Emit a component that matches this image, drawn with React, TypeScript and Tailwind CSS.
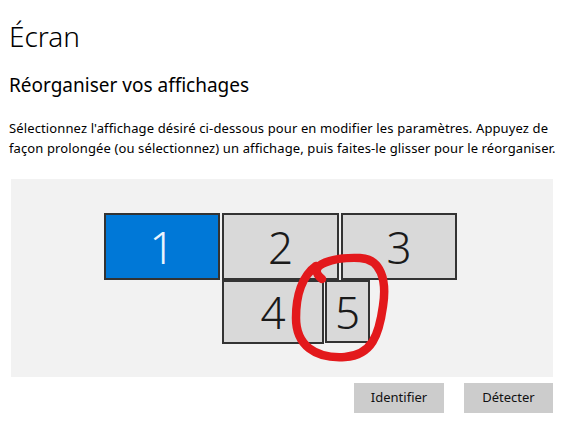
const FONT = "font-['Noto_Sans','Open_Sans',sans-serif]";

type Monitor = { id: number; left: number; top: number; w: number; h: number; active?: boolean };

// positions are relative to the arrangement canvas
const MONITORS: Monitor[] = [
  { id: 1, left: 93, top: 34, w: 116, h: 67, active: true },
  { id: 2, left: 211, top: 34, w: 117, h: 67 },
  { id: 3, left: 330, top: 34, w: 116, h: 67 },
  { id: 4, left: 211, top: 101, w: 102, h: 64 },
  { id: 5, left: 314, top: 101, w: 45, h: 63 },
];

function MonitorBox({ m }: { m: Monitor }) {
  return (
    <div
      className={`absolute flex items-center justify-center border-2 border-[#333333] ${
        m.active ? 'bg-[#0078d7] text-[#eaf4ff]' : 'bg-[#d9d9d9] text-[#1a1a1a]'
      }`}
      style={{ left: m.left, top: m.top, width: m.w, height: m.h }}
    >
      <span className="text-[44px] leading-none font-light">{m.id}</span>
    </div>
  );
}

export default function App() {
  return (
    <div className={`${FONT} h-[437px] w-[575px] bg-white px-[9px] pt-[18px] text-black`}>
      <h1 className="text-[28px] font-light leading-[36px]">Écran</h1>
      <h2 className="mt-[18px] text-[19px] leading-[26px]">Réorganiser vos affichages</h2>
      <p className="mt-[20px] whitespace-nowrap text-[13px] leading-[20px] tracking-[0.12px]">
        Sélectionnez l'affichage désiré ci-dessous pour en modifier les paramètres. Appuyez de
        <br />
        façon prolongée (ou sélectionnez) un affichage, puis faites-le glisser pour le réorganiser.
      </p>

      <div className="relative mt-[21px] ml-[2px] h-[198px] w-[542px] bg-[#f2f2f2]">
        {MONITORS.map((m) => (
          <MonitorBox key={m.id} m={m} />
        ))}
        {/* annotation drawn over monitor 5 */}
        <svg className="absolute left-0 top-0" width="542" height="198" viewBox="11 179 542 198" fill="none">
          <path
            d="M322 279 C304 264 336 257 360 258 C381 259 387 280 383 306 C379 335 372 355 345 357 C315 359 296 345 296 318 C296 296 302 276 316 266"
            stroke="#e3191c"
            strokeWidth="8.5"
            strokeLinecap="round"
          />
        </svg>
      </div>

      <div className="mt-[6px] flex justify-end gap-[20px] pr-[13px]">
        <button type="button" className="h-[30px] w-[90px] bg-[#cccccc] text-[13px] text-[#111]">
          Identifier
        </button>
        <button type="button" className="h-[30px] w-[89px] bg-[#cccccc] text-[13px] text-[#111]">
          Détecter
        </button>
      </div>
    </div>
  );
}
